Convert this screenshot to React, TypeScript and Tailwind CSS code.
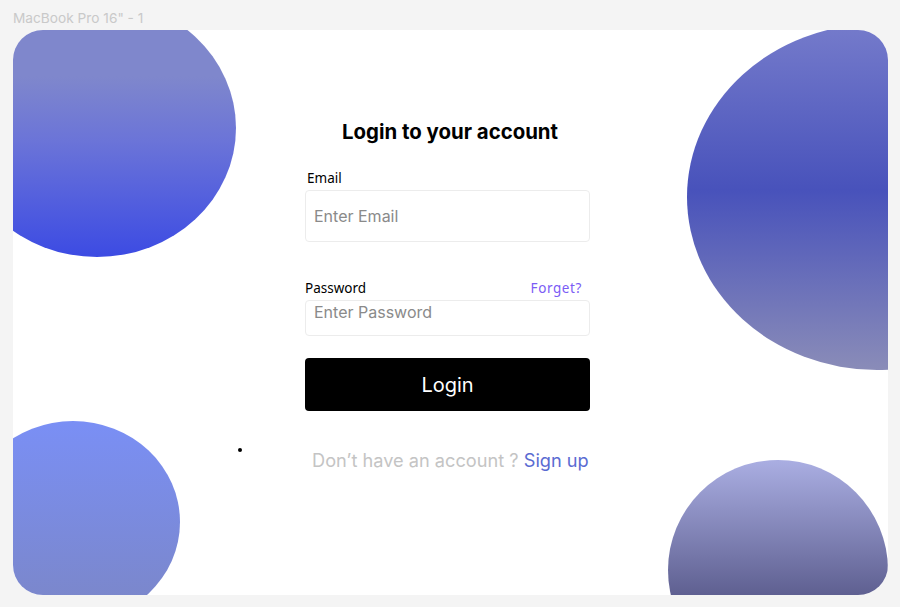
import React from 'react';

// decorative blobs sit on the frame as a free canvas
function Blobs() {
  return (
    <>
      <div className="absolute left-[-55px] top-[-31px] h-[258px] w-[278px] rounded-[50%] bg-[linear-gradient(180deg,#7f87cc_0%,#7f87cc_30%,#6b74d8_55%,#3c4be3_100%)]" />
      <div className="absolute left-[674px] top-[-6px] h-[346px] w-[380px] rounded-[50%] bg-[linear-gradient(180deg,#757bcb_0%,#4852bb_48%,#8a8cb8_100%)]" />
      <div className="absolute left-[-47px] top-[391px] h-[202px] w-[214px] rounded-[50%] bg-[linear-gradient(180deg,#7a8ff5_0%,#7b86c6_100%)]" />
      <div className="absolute left-[655px] top-[430px] h-[220px] w-[220px] rounded-full bg-[linear-gradient(180deg,#aaaee2_0%,#5a5b8c_65%,#4a4a78_100%)]" />
      <div className="absolute left-[225px] top-[418px] h-[4px] w-[4px] rounded-full bg-black" />
    </>
  );
}

export default function App() {
  return (
    <div className="relative h-[607px] w-[900px] overflow-hidden bg-[#f4f4f4] font-['Inter',sans-serif]">
      <div className="h-[30px] pl-[13px] pt-[10px] text-[13.7px] leading-[17px] text-[#c9c9c9]">
        MacBook Pro 16&quot; - 1
      </div>
      <div className="relative ml-[13px] h-[565px] w-[875px] overflow-hidden rounded-[30px] bg-white">
        <Blobs />
        <div className="relative ml-[292px] flex w-[285px] flex-col pt-[90px]">
          <h1 className="ml-[5px] text-center text-[20.4px] font-bold leading-[24px] text-black">
            Login to your account
          </h1>
          <label className="ml-[2px] mt-[26px] font-['Noto_Sans',sans-serif] text-[13.5px] leading-[16px] text-black">
            Email
          </label>
          <div className="mt-[4px] flex h-[52px] items-center rounded-[4px] border border-[#ececec] px-[8px] text-[16px] text-[#8a8a8a]">
            Enter Email
          </div>
          <div className="mt-[38px] flex items-center justify-between pr-[8px] font-['Noto_Sans',sans-serif] text-[13.5px] leading-[16px]">
            <span className="text-black">Password</span>
            <span className="tracking-[0.6px] text-[#7b5cf5]">Forget?</span>
          </div>
          <div className="mt-[4px] h-[36px] rounded-[4px] border border-[#ececec] px-[8px] pt-[1px] text-[16px] leading-[20px] text-[#8a8a8a]">
            Enter Password
          </div>
          <button className="mt-[22px] flex h-[53px] items-center justify-center rounded-[4px] bg-black text-[20px] text-white">
            Login
          </button>
          <p className="mt-[38px] whitespace-nowrap pl-[7px] text-[18.2px] leading-[22px] text-[#c4c4c4]">
            Don’t have an account ? <span className="text-[#5a6bd2]">Sign up</span>
          </p>
        </div>
      </div>
    </div>
  );
}
